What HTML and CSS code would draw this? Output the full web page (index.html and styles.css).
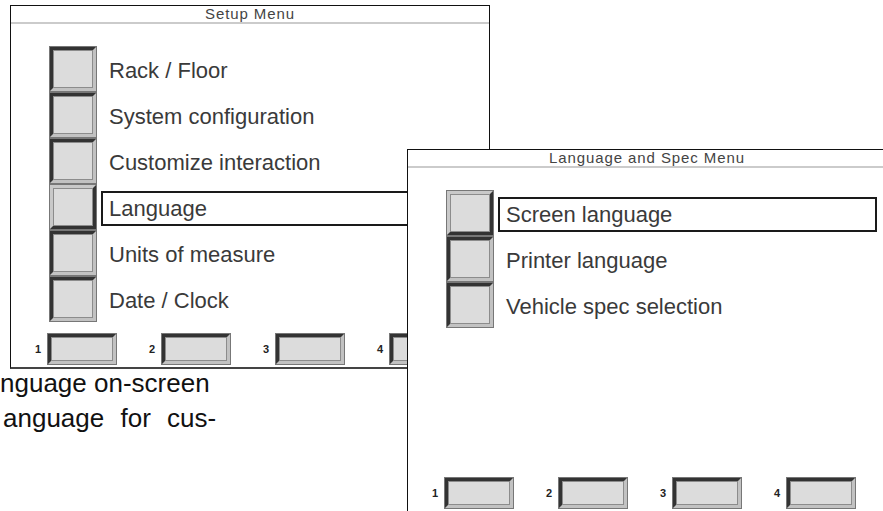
FILE: index.html
```html
<!DOCTYPE html>
<html lang="en">
<head>
    <meta charset="UTF-8">
    <meta name="viewport" content="width=device-width, initial-scale=1.0">
    <title>Setup Menu - Language</title>
    <link rel="stylesheet" href="styles.css">
</head>
<body>
    <div class="menu">
        <div class="menu-title">Setup Menu</div>
        <ul class="menu-list">
            <li class="menu-item"><span class="key"></span><span class="item-label">Rack / Floor</span></li>
            <li class="menu-item"><span class="key"></span><span class="item-label">System configuration</span></li>
            <li class="menu-item"><span class="key"></span><span class="item-label">Customize interaction</span></li>
            <li class="menu-item selected"><span class="key"></span><span class="item-label">Language</span></li>
            <li class="menu-item"><span class="key"></span><span class="item-label">Units of measure</span></li>
            <li class="menu-item"><span class="key"></span><span class="item-label">Date / Clock</span></li>
        </ul>
        <div class="fn-bar">
            <div class="fn"><span class="fn-num">1</span><span class="key key-fn"></span></div>
            <div class="fn"><span class="fn-num">2</span><span class="key key-fn"></span></div>
            <div class="fn"><span class="fn-num">3</span><span class="key key-fn"></span></div>
            <div class="fn"><span class="fn-num">4</span><span class="key key-fn"></span></div>
        </div>
    </div>

    <p class="doc-line">nguage on-screen</p>
    <p class="doc-line doc-wide">anguage for cus-</p>

    <!-- sub menu opened on top of the setup menu -->
    <div class="menu menu-popup">
        <div class="menu-title">Language and Spec Menu</div>
        <ul class="menu-list">
            <li class="menu-item selected"><span class="key"></span><span class="item-label">Screen language</span></li>
            <li class="menu-item"><span class="key"></span><span class="item-label">Printer language</span></li>
            <li class="menu-item"><span class="key"></span><span class="item-label">Vehicle spec selection</span></li>
        </ul>
        <div class="fn-bar">
            <div class="fn"><span class="fn-num">1</span><span class="key key-fn"></span></div>
            <div class="fn"><span class="fn-num">2</span><span class="key key-fn"></span></div>
            <div class="fn"><span class="fn-num">3</span><span class="key key-fn"></span></div>
            <div class="fn"><span class="fn-num">4</span><span class="key key-fn"></span></div>
        </div>
    </div>
</body>
</html>
```

FILE: styles.css
```css
body {
    font-family: "Liberation Sans", Arial, sans-serif;
    background-color: #fff;
    color: #111;
    margin: 0;
    padding: 0;
    width: 883px;
    height: 511px;
    overflow: hidden;
    position: relative;
}
.menu {
    box-sizing: border-box;
    width: 480px;
    height: 364px;
    margin: 5px 0 0 10px;
    background-color: #fff;
    border: 1px solid #111;
    border-bottom: 2px solid #444;
    display: flex;
    flex-direction: column;
}
.menu-popup {
    position: absolute;
    left: 407px;
    top: 149px;
    margin: 0;
}
.menu-title {
    height: 16px;
    line-height: 16px;
    font-size: 15px;
    letter-spacing: 0.9px;
    color: #444;
    text-align: center;
    border-bottom: 2px solid #cbcbcb;
}
.menu-list {
    list-style: none;
    margin: 22px 0 0 0;
    padding: 0;
}
.menu-item {
    display: flex;
    height: 46px;
    padding-left: 38px;
    gap: 4px;
}
.key {
    box-sizing: border-box;
    width: 48px;
    height: 46px;
    background-color: #dcdcdc;
    border: 4px solid;
    border-color: #333 #c2c2c2 #c2c2c2 #333;
    outline: 1px solid #777;
    outline-offset: -1px;
    box-shadow: inset 0 0 0 1px #8c8c8c;
}
.selected .key {
    border-color: #c9c9c9 #333 #333 #c9c9c9;
}
.item-label {
    flex: 1;
    height: 35px;
    margin: 7px 9px 0 0;
    padding-left: 6px;
    border: 2px solid transparent;
    box-sizing: border-box;
    display: flex;
    align-items: center;
    font-size: 22px;
    color: #3a3a3a;
    white-space: nowrap;
}
.selected .item-label {
    border-color: #1a1a1a;
}
.fn-bar {
    margin-top: auto;
    padding: 0 0 2px 22px;
    display: flex;
    gap: 30px;
}
.fn {
    display: flex;
    align-items: center;
    gap: 4px;
}
.fn-num {
    width: 10px;
    text-align: center;
    font-size: 11px;
    font-weight: bold;
    color: #222;
}
.key-fn {
    width: 70px;
    height: 32px;
}
.doc-line {
    margin: 0;
    font-size: 26px;
    line-height: 28px;
    color: #111;
    white-space: nowrap;
}
.doc-wide {
    margin: 7px 0 0 3px;
    word-spacing: 9px;
}
```
